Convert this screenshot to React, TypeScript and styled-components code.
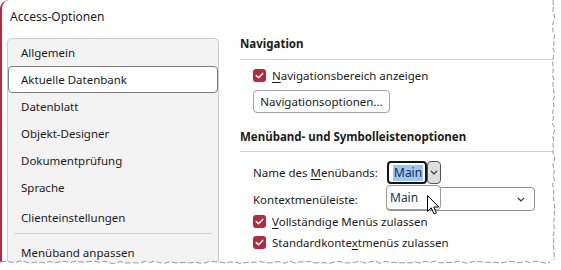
import React from 'react';
import styled, { createGlobalStyle } from 'styled-components';

const GlobalStyle = createGlobalStyle`
  html, body {
    margin: 0;
    padding: 0;
    background: #ffffff;
  }
  body {
    font-family: 'Noto Sans', 'Open Sans', sans-serif;
    font-size: 11.5px;
    color: #1b1b1b;
  }
`;

const Page = styled.div`
  position: relative;
  width: 561px;
  height: 270px;
  overflow: hidden;
  background: #ffffff;
`;

const Window = styled.div`
  width: 553px;
  height: 262px;
  overflow: hidden;
  box-sizing: border-box;
  border-left: 2px solid #b9283d;
  border-top-left-radius: 9px;
  display: flex;
  flex-direction: column;
`;

const TitleBar = styled.div`
  height: 33px;
  display: flex;
  align-items: center;
  padding-left: 8px;
  font-size: 12px;
  flex: none;
`;

const Body = styled.div`
  display: flex;
  flex: 1;
  padding-left: 5px;
`;

const Nav = styled.nav`
  width: 212px;
  margin-top: 5px;
  box-sizing: border-box;
  background: #f3f3f3;
  border: 1px solid #cdcdcd;
  border-bottom: none;
  border-radius: 5px 5px 0 0;
  display: flex;
  flex-direction: column;
  flex: none;
`;

const NavItem = styled.div<{ $active?: boolean; $gapTop?: number }>`
  height: 27px;
  flex: none;
  box-sizing: border-box;
  display: flex;
  align-items: center;
  padding-left: 13px;
  margin: ${p => p.$gapTop ?? 0}px 0 0;
  ${p => p.$active && `
    background: #ffffff;
    border: 1px solid #7d7d7d;
    border-radius: 4px;
    margin-left: 0;
    margin-right: 0;
    padding-left: 12px;
  `}
`;

const NavSeparator = styled.div`
  height: 1px;
  background: #d2d2d2;
  margin: 2px 6px 5px 6px;
  flex: none;
`;

const Content = styled.div`
  flex: 1;
  margin-left: 21px;
  display: flex;
  flex-direction: column;
`;

const SectionHeader = styled.div<{ $top?: number }>`
  height: 20px;
  display: flex;
  align-items: center;
  font-weight: 700;
  font-size: 11.5px;
  margin-top: ${p => p.$top ?? 0}px;
`;

const Rule = styled.div<{ $top: number }>`
  height: 1px;
  background: #d0d0d0;
  margin-top: ${p => p.$top}px;
`;

const Indent = styled.div<{ $top: number }>`
  margin-top: ${p => p.$top}px;
  padding-left: 13px;
  display: flex;
  align-items: center;
`;

const CheckRow = styled(Indent)`
  height: 16px;
  gap: 6px;
`;

const Box = styled.span`
  width: 13px;
  height: 13px;
  border-radius: 3px;
  background: #b52b3e;
  display: inline-flex;
  align-items: center;
  justify-content: center;
  flex: none;
`;

const Key = styled.u`
  text-decoration-thickness: 1px;
  text-underline-offset: 2px;
`;

const Button = styled.div`
  height: 23px;
  width: 137px;
  box-sizing: border-box;
  border: 1px solid #a3a3a3;
  border-radius: 4px;
  display: flex;
  align-items: center;
  justify-content: center;
  background: #fdfdfd;
`;

const Label = styled.span`
  width: 133px;
  flex: none;
`;

const ComboWrap = styled.div`
  position: relative;
  display: flex;
  height: 23px;
  margin-left: 1px;
`;

const FocusBox = styled.div`
  width: 40px;
  height: 23px;
  box-sizing: border-box;
  border: 2px solid #141414;
  border-radius: 4px;
  display: flex;
  align-items: center;
  padding-left: 4px;
`;

const Selected = styled.span`
  background: #99c9ef;
  color: #1c2a55;
  padding: 0 1px;
  line-height: 16px;
  font-size: 12px;
`;

const DropButton = styled.div`
  width: 14px;
  height: 23px;
  box-sizing: border-box;
  border: 1px solid #555555;
  border-radius: 4px;
  background: #dedede;
  display: flex;
  align-items: center;
  justify-content: center;
`;

const Popup = styled.div`
  position: absolute;
  left: -1px;
  top: 24px;
  width: 55px;
  height: 25px;
  box-sizing: border-box;
  border: 1px solid #9c9c9c;
  border-radius: 4px;
  background: #ffffff;
  display: flex;
  align-items: center;
  padding-left: 3px;
  color: #1f2f62;
  font-size: 12px;
  z-index: 2;
`;

const Select = styled.div`
  width: 149px;
  height: 24px;
  box-sizing: border-box;
  border: 1px solid #8e8e8e;
  border-radius: 4px;
  display: flex;
  align-items: center;
  justify-content: flex-end;
  padding-right: 9px;
`;

const Overlay = styled.svg`
  position: absolute;
  left: 0;
  top: 0;
  pointer-events: none;
`;

const Chevron = () => (
  <svg width="8" height="5" viewBox="0 0 8 5">
    <path d="M1 1 L4 4 L7 1" fill="none" stroke="#333" strokeWidth="1.1" />
  </svg>
);

const Check = () => (
  <svg width="13" height="13" viewBox="0 0 13 13">
    <path d="M3.3 6.6 L5.5 8.7 L9.7 4.4" fill="none" stroke="#fff" strokeWidth="1.5" strokeLinecap="round" strokeLinejoin="round" />
  </svg>
);

// deterministic little wobble for the torn edges
const wobble = (i: number) => {
  const v = Math.sin(i * 12.9898) * 43758.5453;
  return v - Math.floor(v);
};

const tornRight = () => {
  let d = 'M553 0';
  for (let y = 4; y <= 262; y += 4) {
    d += ` L${(552.5 + wobble(y) * 2.2).toFixed(1)} ${y}`;
  }
  return d;
};

const tornBottom = () => {
  let d = 'M0 262';
  for (let x = 5; x <= 553; x += 5) {
    d += ` L${x} ${(261 + wobble(x + 7) * 2.4).toFixed(1)}`;
  }
  return d;
};

const TornEdges = () => {
  const right = tornRight();
  const bottom = tornBottom();
  return (
    <Overlay width="561" height="270" viewBox="0 0 561 270">
      <path d={`${right} L561 262 L561 0 Z`} fill="#fff" />
      <path d={`${bottom} L553 270 L0 270 Z`} fill="#fff" />
      <rect x="553" y="258" width="8" height="12" fill="#fff" />
      <path d={right} fill="none" stroke="#8f8f8f" strokeWidth="0.9" strokeDasharray="5 2" />
      <path d={bottom} fill="none" stroke="#8f8f8f" strokeWidth="0.9" strokeDasharray="6 2" />
    </Overlay>
  );
};

const Cursor = () => (
  <Overlay width="561" height="270" viewBox="0 0 561 270" style={{ zIndex: 3 }}>
    <path
      d="M427.5 195.5 L427.5 211.5 L431.2 207.8 L434 213.8 L436.4 212.8 L433.8 207 L438.8 207 Z"
      fill="#ffffff"
      stroke="#000000"
      strokeWidth="1"
      strokeLinejoin="round"
    />
  </Overlay>
);

const navItems = ['Allgemein', 'Aktuelle Datenbank', 'Datenblatt', 'Objekt-Designer', 'Dokumentprüfung', 'Sprache'];

export default function App() {
  return (
    <Page>
      <GlobalStyle />
      <Window>
        <TitleBar>Access-Optionen</TitleBar>
        <Body>
          <Nav>
            {navItems.map(item => (
              <NavItem key={item} $active={item === 'Aktuelle Datenbank'}>{item}</NavItem>
            ))}
            <NavItem $gapTop={3}>Clienteinstellungen</NavItem>
            <NavSeparator />
            <NavItem>Menüband anpassen</NavItem>
          </Nav>
          <Content>
            <SectionHeader>Navigation</SectionHeader>
            <Rule $top={6} />
            <CheckRow $top={7}>
              <Box><Check /></Box>
              <span><Key>N</Key>avigationsbereich anzeigen</span>
            </CheckRow>
            <Indent $top={7}>
              <Button>Navigationsoptionen...</Button>
            </Indent>
            <SectionHeader $top={13}>Menüband- und Symbolleistenoptionen</SectionHeader>
            <Rule $top={5} />
            <Indent $top={9}>
              <Label>Name des <Key>M</Key>enübands:</Label>
              <ComboWrap>
                <FocusBox><Selected>Main</Selected></FocusBox>
                <DropButton><Chevron /></DropButton>
                <Popup>Main</Popup>
              </ComboWrap>
            </Indent>
            <Indent $top={3}>
              <Label>Kontextmenüleiste:</Label>
              <Select><Chevron /></Select>
            </Indent>
            <CheckRow $top={2}>
              <Box><Check /></Box>
              <span><Key>V</Key>ollständige Menüs zulassen</span>
            </CheckRow>
            <CheckRow $top={5}>
              <Box><Check /></Box>
              <span>Standardkonte<Key>x</Key>tmenüs zulassen</span>
            </CheckRow>
          </Content>
        </Body>
      </Window>
      <TornEdges />
      <Cursor />
    </Page>
  );
}
